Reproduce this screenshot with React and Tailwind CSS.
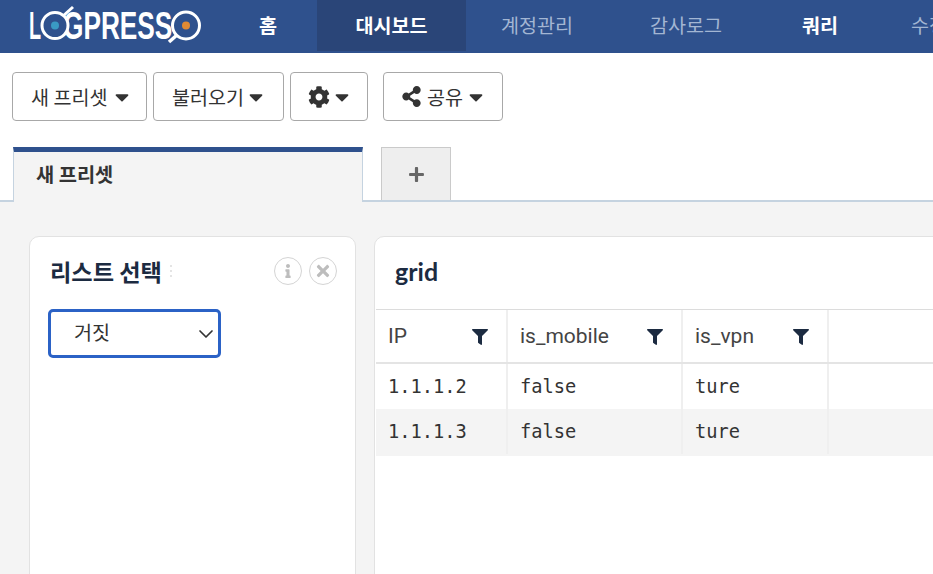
import React from "react";
import { FaCog, FaShareAlt, FaFilter, FaPlus, FaInfo, FaTimes, FaCaretDown } from "react-icons/fa";
import { LuChevronDown } from "react-icons/lu";

const KR = "font-['Noto_Sans_CJK_KR','Noto_Sans',sans-serif]";

function Logo() {
  return (
    <div className="relative flex h-[53px] w-[221px] shrink-0 items-center pl-[29px] font-['Liberation_Sans',sans-serif] text-[38px] leading-none font-bold whitespace-nowrap text-white">
      <span className="inline-block w-[46px] pb-[1px]">
        <span className="inline-block origin-left scale-x-[0.52]">L</span>
      </span>
      <span className="inline-block pb-[1px]">
        <span className="inline-block origin-left scale-x-[0.69]">GPRESS</span>
      </span>
      <svg width="221" height="53" viewBox="0 0 221 53" className="absolute top-0 left-0">
        <circle cx="55" cy="25.5" r="13" fill="#2f518d" stroke="#fff" strokeWidth="3" />
        <path d="M63 16 L73 7" stroke="#fff" strokeWidth="3" />
        <circle cx="55" cy="25.5" r="4" fill="#3a9ac4" />
        <circle cx="186" cy="25.5" r="13.5" fill="none" stroke="#fff" strokeWidth="3" />
        <path d="M177 35 L169 42" stroke="#fff" strokeWidth="3.5" />
        <circle cx="186" cy="25.5" r="4" fill="#e08a34" />
      </svg>
    </div>
  );
}

function Nav() {
  return (
    <div className={`flex h-[53px] shrink-0 items-start overflow-hidden whitespace-nowrap bg-[#2f518d] text-[19.6px] ${KR}`}>
      <Logo />
      <div className="flex h-[51px] w-[96px] shrink-0 items-center pb-[1px] pl-[38px] font-bold text-white">홈</div>
      <div className="flex h-[51px] w-[149px] shrink-0 items-center justify-center pb-[1px] bg-[#2a4578] font-bold text-white">대시보드</div>
      <div className="flex h-[51px] w-[149px] shrink-0 items-center pb-[1px] pl-[35px] text-[#a3b6d3]">계정관리</div>
      <div className="flex h-[51px] w-[148px] shrink-0 items-center pb-[1px] pl-[35px] text-[#a3b6d3]">감사로그</div>
      <div className="flex h-[51px] w-[148px] shrink-0 items-center pb-[1px] pl-[39px] font-bold text-white">쿼리</div>
      <div className="flex h-[51px] shrink-0 items-center pb-[1px] text-[#a3b6d3]">수정</div>
    </div>
  );
}

function Btn({ className = "", children }) {
  return (
    <div className={`flex h-[49px] items-center rounded-[4px] border border-[#a8a8a8] bg-white text-[19.6px] text-[#333] ${className}`}>
      {children}
    </div>
  );
}

function Toolbar() {
  return (
    <div className={`flex h-[94px] shrink-0 items-start pl-3 pt-[19px] ${KR}`}>
      <Btn className="w-[135px] pl-[18px]">새 프리셋<FaCaretDown className="ml-[3px] text-[22px]" /></Btn>
      <Btn className="ml-[6px] w-[131px] pl-[18px]">불러오기<FaCaretDown className="ml-[1px] text-[22px]" /></Btn>
      <Btn className="ml-[6px] w-[78px] pl-[17px]"><FaCog className="text-[22px]" /><FaCaretDown className="ml-[1px] text-[22px]" /></Btn>
      <Btn className="ml-[15px] w-[120px] pl-[17px]"><FaShareAlt className="mr-[5px] text-[21px]" />공유<FaCaretDown className="ml-[2px] text-[22px]" /></Btn>
    </div>
  );
}

function Tabs() {
  return (
    <div className={`flex h-[55px] shrink-0 items-end border-b-2 border-[#c5d3e0] pl-[13px] ${KR}`}>
      <div className="-mb-[2px] flex h-[55px] w-[350px] items-center border-x border-t-[5px] border-x-[#c5d3e0] border-t-[#2f518d] bg-[#f4f4f4] pl-[22px] pb-[7px] text-[19.8px] font-bold text-[#333]">
        새 프리셋
      </div>
      <div className="ml-[18px] flex h-[53px] w-[70px] items-center justify-center border-x border-t border-[#cacaca] bg-[#eeeeee] text-[#666]">
        <FaPlus className="text-[17px]" />
      </div>
    </div>
  );
}

function ListCard() {
  return (
    <div className="h-[400px] w-[327px] shrink-0 rounded-t-[10px] border border-[#e2e2e2] bg-white pl-[18px] pt-[16px]">
      <div className="flex h-[36px] items-center pr-[18px]">
        <span className={`ml-[2px] text-[23.2px] font-bold whitespace-nowrap text-[#1c2b41] ${KR}`}>리스트 선택</span>
        <span className="ml-[8px] flex h-[12px] flex-col justify-between">
          <i className="block h-[2px] w-[2px] bg-[#e4e4e4]" />
          <i className="block h-[2px] w-[2px] bg-[#e4e4e4]" />
          <i className="block h-[2px] w-[2px] bg-[#e4e4e4]" />
        </span>
        <span className="ml-auto flex h-[28px] w-[28px] items-center justify-center rounded-full border border-[#d4d4d4] text-[#bdbdbd]"><FaInfo className="text-[14px]" /></span>
        <span className="ml-[7px] flex h-[28px] w-[28px] items-center justify-center rounded-full border border-[#d4d4d4] text-[#bdbdbd]"><FaTimes className="text-[18px]" /></span>
      </div>
      <div className={`mt-[20px] flex h-[49px] w-[173px] items-center justify-between rounded-[5px] border-[3px] border-[#2b62c6] pl-[23px] text-[19.6px] text-[#333] ${KR}`}>
        <span className="pb-[3px]">거짓</span>
        <LuChevronDown className="text-[24px] [stroke-width:1.7]" />
      </div>
    </div>
  );
}

function Th({ w, children }) {
  return (
    <div className={`flex h-full shrink-0 items-center justify-between border-r-2 border-[#efefef] pl-[12px] pr-[18px] pt-[1px] text-[21px] text-[#444] ${w}`}>
      <span className="font-['Roboto',sans-serif]">{children}</span>
      <FaFilter className="text-[16px] text-[#1c2b41]" />
    </div>
  );
}

function Td({ w, children }) {
  return (
    <div className={`flex h-full shrink-0 items-center border-r-2 border-[#efefef] pl-[12px] pt-[2px] font-['DejaVu_Sans_Mono',monospace] text-[18.7px] text-[#333] ${w}`}>
      {children}
    </div>
  );
}

function Row({ a, b, c, className = "" }) {
  return (
    <div className={`flex ${className}`}>
      <Td w="w-[132px]">{a}</Td>
      <Td w="w-[175px]">{b}</Td>
      <Td w="w-[146px]">{c}</Td>
    </div>
  );
}

function GridCard() {
  return (
    <div className="ml-[18px] h-[400px] w-[700px] shrink-0 rounded-t-[10px] border border-[#e2e2e2] bg-white">
      <div className="flex h-[72px] items-center pl-[20px] pb-[2px] font-['Lato',sans-serif] text-[25px] font-bold text-[#1c2b41]">grid</div>
      <div className="ml-px border-t border-[#dcdcdc]">
        <div className="flex h-[54px] border-b-2 border-[#e4e4e4]">
          <Th w="w-[132px]">IP</Th>
          <Th w="w-[175px]">is_mobile</Th>
          <Th w="w-[146px]">is_vpn</Th>
        </div>
        <Row a="1.1.1.2" b="false" c="ture" className="h-[45px]" />
        <Row a="1.1.1.3" b="false" c="ture" className="h-[47px] bg-[#f4f4f4] pb-[2px]" />
      </div>
    </div>
  );
}

export default function App() {
  return (
    <div className="flex h-[574px] w-[933px] flex-col overflow-hidden bg-white">
      <Nav />
      <Toolbar />
      <Tabs />
      <div className="flex flex-1 bg-[#f4f4f4] pl-[29px] pt-[34px]">
        <ListCard />
        <GridCard />
      </div>
    </div>
  );
}
